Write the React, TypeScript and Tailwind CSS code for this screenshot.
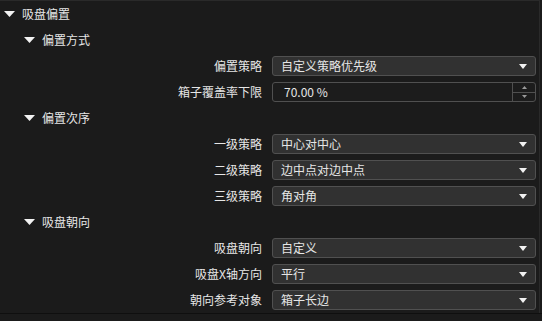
import type { ReactNode } from "react";

const FONT = {
  fontFamily: '"Noto Sans CJK SC", "Liberation Sans", sans-serif',
};

type Field =
  | { kind: "combo"; label: string; value: string }
  | { kind: "spin"; label: string; value: string };

type Group = {
  title: string;
  fields: Field[];
};

const GROUPS: Group[] = [
  {
    title: "偏置方式",
    fields: [
      { kind: "combo", label: "偏置策略", value: "自定义策略优先级" },
      { kind: "spin", label: "箱子覆盖率下限", value: "70.00 %" },
    ],
  },
  {
    title: "偏置次序",
    fields: [
      { kind: "combo", label: "一级策略", value: "中心对中心" },
      { kind: "combo", label: "二级策略", value: "边中点对边中点" },
      { kind: "combo", label: "三级策略", value: "角对角" },
    ],
  },
  {
    title: "吸盘朝向",
    fields: [
      { kind: "combo", label: "吸盘朝向", value: "自定义" },
      { kind: "combo", label: "吸盘X轴方向", value: "平行" },
      { kind: "combo", label: "朝向参考对象", value: "箱子长边" },
    ],
  },
];

const Caret = () => (
  <svg width="11" height="6" viewBox="0 0 11 6" className="shrink-0">
    <polygon points="0,0 11,0 5.5,6" fill="#f2f2f2" />
  </svg>
);

const SmallCaret = () => (
  <svg width="8" height="5" viewBox="0 0 8 5" className="shrink-0">
    <polygon points="0,0 8,0 4,5" fill="#f2f2f2" />
  </svg>
);

const Header = ({ indent, children }: { indent: string; children: ReactNode }) => (
  <div className={`flex h-[26px] items-center ${indent}`}>
    <Caret />
    <span className="ml-[7px] text-[12px] leading-none text-[#e6e6e6]">
      {children}
    </span>
  </div>
);

const FieldRow = ({ field }: { field: Field }) => (
  <div className="flex h-[26px] items-center">
    <div className="w-[262px] shrink-0 pr-0 text-right text-[12px] leading-none text-[#e6e6e6]">
      {field.label}
    </div>
    {field.kind === "combo" ? (
      <div className="ml-[10px] flex h-[20px] w-[264px] items-center justify-between rounded-[3px] border border-[#505050] bg-[#313131] pr-[8px] pl-[8px]">
        <span className="text-[12px] leading-none text-[#e6e6e6]">
          {field.value}
        </span>
        <SmallCaret />
      </div>
    ) : (
      <div className="ml-[10px] flex h-[20px] w-[264px] items-center rounded-[3px] border border-[#505050] bg-[#1c1c1c]">
        <span className="flex-1 pl-[11px] text-[12px] leading-none text-[#e6e6e6]">
          {field.value}
        </span>
        <div className="flex h-full w-[23px] flex-col border-l border-[#505050]">
          <div className="flex flex-1 items-center justify-center border-b border-[#505050]">
            <svg width="5" height="3" viewBox="0 0 5 3">
              <polygon points="0,3 5,3 2.5,0" fill="#9a9a9a" />
            </svg>
          </div>
          <div className="flex flex-1 items-center justify-center">
            <svg width="5" height="3" viewBox="0 0 5 3">
              <polygon points="0,0 5,0 2.5,3" fill="#9a9a9a" />
            </svg>
          </div>
        </div>
      </div>
    )}
  </div>
);

export default function App() {
  return (
    <div
      className="h-[321px] w-[542px] overflow-hidden bg-[#1b1b1b]"
      style={FONT}
    >
      <div className="h-[313px] w-[540px] border-t border-r border-[#2a2a2a] border-b-[#101010]">
        <Header indent="pl-[4px]">吸盘偏置</Header>
        {GROUPS.map((group) => (
          <div key={group.title}>
            <Header indent="pl-[24px]">{group.title}</Header>
            {group.fields.map((field) => (
              <FieldRow key={field.label} field={field} />
            ))}
          </div>
        ))}
      </div>
      <div className="h-px w-full bg-[#0f0f0f]" />
    </div>
  );
}
